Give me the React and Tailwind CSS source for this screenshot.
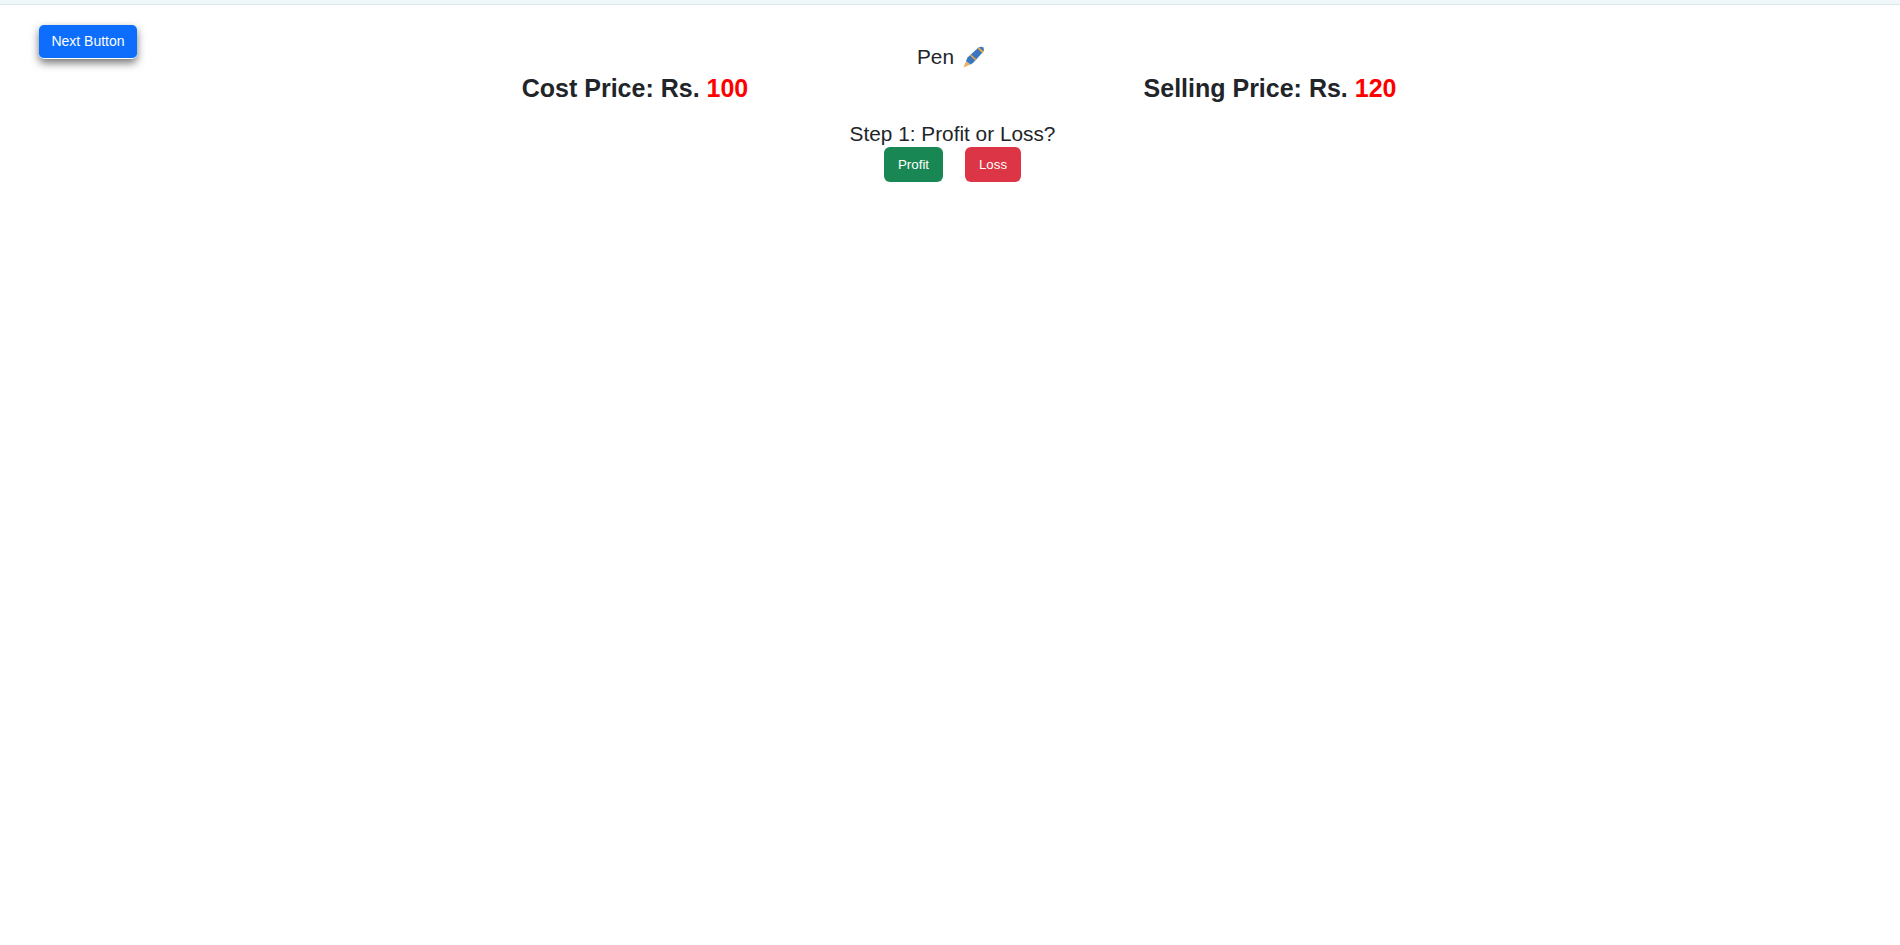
import React from "react";

const PenIcon = () => (
  <svg width="22" height="22" viewBox="0 0 22 22" className="shrink-0">
    <path d="M0.5 21.5 L3 15 L7.5 18.5 Z" fill="#e3b565" />
    <path d="M3 15 L4.5 11.5 L15.5 1.5 Q18.5 0 20.5 1.5 Q21.5 3.5 20 6 L10 17 L7.5 18.5 Z" fill="#3a76c2" />
    <path d="M15.5 2 L20 6.5" stroke="#f0a93a" strokeWidth="1.8" />
    <path d="M7.5 9 L13 14" stroke="#f0a93a" strokeWidth="1.6" />
  </svg>
);

const PriceLabel = ({ label, value }) => (
  <div className="text-center text-[25px] leading-[29px] font-bold text-[#212529]">
    {label}: Rs. <span className="text-[#ff0000]">{value}</span>
  </div>
);

const App = () => {
  return (
    <div className="min-h-screen bg-white font-['Liberation_Sans',Arial,sans-serif] text-[#212529]">
      <div className="h-[5px] bg-[#f0f7fa] border-b border-[#dce8ec]" />

      <div className="grid grid-cols-[1fr_auto_1fr] pl-[39px] pr-[37px]">
        <div className="pt-[20px]">
          <button className="h-[34px] w-[98px] rounded-[5px] border-b border-white bg-[#0d6efd] pb-[2px] text-sm font-medium text-white shadow-[0_4px_8px_rgba(0,0,0,0.55)]">
            Next Button
          </button>
        </div>
        <div className="flex items-center gap-[9px] pt-[40px] text-[20.8px] leading-6">
          <span>Pen</span>
          <PenIcon />
        </div>
        <div />
      </div>

      <div className="pl-[5px]">
        <div className="mx-auto grid w-[1270px] grid-cols-2 pt-[5px]">
          <PriceLabel label="Cost Price" value="100" />
          <PriceLabel label="Selling Price" value="120" />
        </div>
        <div className="pt-[19px] text-center text-[20.8px] leading-6">Step 1: Profit or Loss?</div>
        <div className="flex justify-center gap-[22px] pt-[1px]">
          <button className="h-[35px] w-[59px] rounded-md bg-[#198754] text-[13.33px] text-white">Profit</button>
          <button className="h-[35px] w-[56px] rounded-md bg-[#dc3545] text-[13.33px] text-white">Loss</button>
        </div>
      </div>
    </div>
  );
};

export default App;
